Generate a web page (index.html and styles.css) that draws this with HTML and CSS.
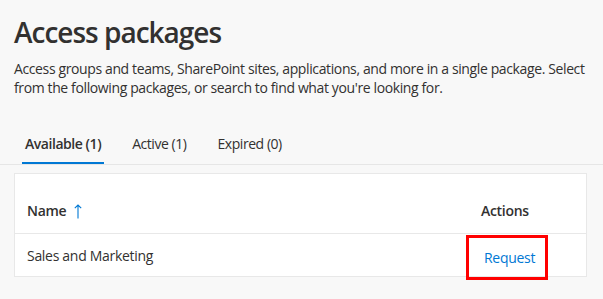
FILE: index.html
```html
<!DOCTYPE html>
<html lang="en">
<head>
    <meta charset="UTF-8">
    <meta name="viewport" content="width=device-width, initial-scale=1.0">
    <title>Access packages</title>
    <link rel="stylesheet" href="styles.css">
</head>
<body>

<div class="page">
    <h1>Access packages</h1>
    <p class="intro">Access groups and teams, SharePoint sites, applications, and more in a single package. Select from the following packages, or search to find what you're looking for.</p>

    <div class="tabs">
        <button class="tab active">Available (1)</button>
        <button class="tab">Active (1)</button>
        <button class="tab">Expired (0)</button>
    </div>

    <div class="card">
        <div class="row head">
            <div class="cell">Name
                <svg class="sort" width="8" height="15" viewBox="0 0 8 15">
                    <path d="M4 14.5V1M0.8 4.2L4 1L7.2 4.2" fill="none" stroke="#0078d4" stroke-width="1.1"/>
                </svg>
            </div>
            <div class="cell">Actions</div>
        </div>
        <div class="row">
            <div class="cell">Sales and Marketing</div>
            <div class="cell action"><a href="#" class="request">Request</a></div>
        </div>
    </div>
</div>

</body>
</html>
```

FILE: styles.css
```css
* {
    margin: 0;
    padding: 0;
    box-sizing: border-box;
}

body {
    font-family: "Open Sans", "Noto Sans", sans-serif;
    background-color: #f8f8f8;
    color: #323130;
    min-height: 100vh;
}

.page {
    padding: 14px 8px 0 14px;
}

h1 {
    font-size: 28px;
    font-weight: 600;
    line-height: 36px;
    letter-spacing: -1px;
}

.intro {
    margin-top: 9px;
    font-size: 14px;
    line-height: 19px;
    letter-spacing: -0.38px;
}

.tabs {
    display: flex;
    gap: 31px;
    margin: 27px -8px 0 -14px;
    padding-left: 25px;
    border-bottom: 1px solid #e6e6e6;
}

.tab {
    position: relative;
    background: none;
    border: none;
    font-family: inherit;
    font-size: 14px;
    color: #323130;
    height: 40px;
    line-height: 36px;
    letter-spacing: -0.45px;
    text-align: left;
    display: block;
    cursor: pointer;
}

.tab.active {
    font-weight: 600;
}

.tab.active::after {
    content: "";
    position: absolute;
    left: -3px;
    right: -3px;
    bottom: 0;
    height: 2px;
    background-color: #0078d4;
}

.card {
    margin-top: 8px;
    background-color: #ffffff;
    border: 1px solid #e8e8e8;
    width: 573px;
}

.row {
    display: grid;
    grid-template-columns: 1fr 105px;
    align-items: center;
    font-size: 14px;
    line-height: 19px;
    letter-spacing: -0.3px;
    height: 42px;
}

.row.head {
    height: 60px;
    align-items: end;
    padding-bottom: 13px;
    font-weight: 600;
    border-bottom: 1px solid #e8e8e8;
}

.row .cell:first-child {
    padding-left: 12px;
}

.sort {
    margin-left: 4px;
    vertical-align: -3px;
}

.cell.action {
    align-self: start;
    height: 42px;
    padding-top: 1px;
}

.request {
    display: block;
    width: 82px;
    height: 45px;
    margin-left: -15px;
    padding: 10px 0 10px 15px;
    border: 3px solid #f00;
    color: #0078d4;
    text-decoration: none;
}
```
